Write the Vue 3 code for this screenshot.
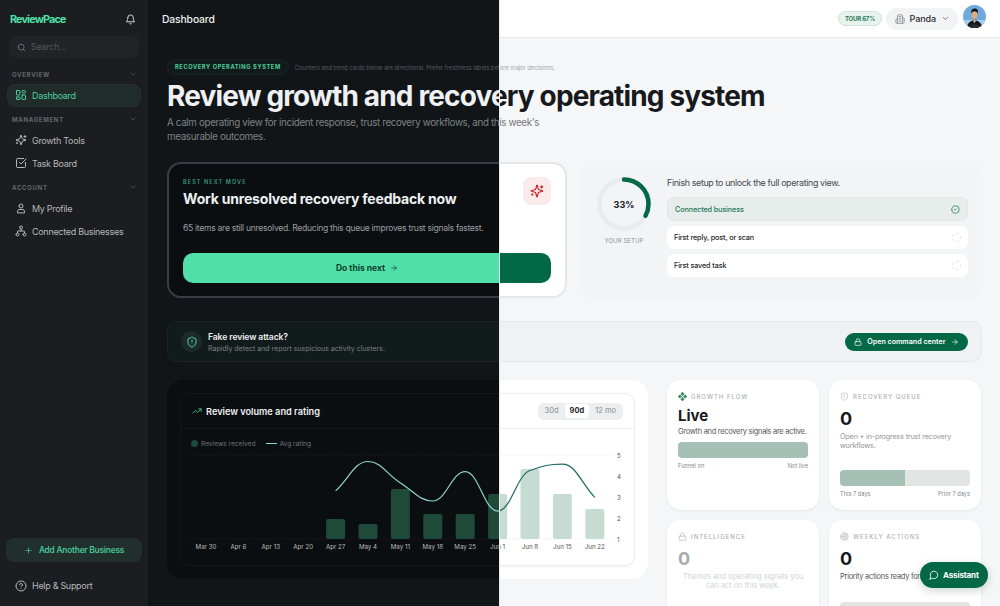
<script setup>
import { h } from 'vue'

const circle = (cx, cy, r) => `M${cx - r} ${cy}a${r} ${r} 0 1 0 ${r * 2} 0a${r} ${r} 0 1 0 ${-r * 2} 0`
const rect = (x, y, w, hh, r) =>
  `M${x + r} ${y}h${w - 2 * r}a${r} ${r} 0 0 1 ${r} ${r}v${hh - 2 * r}a${r} ${r} 0 0 1 ${-r} ${r}h${2 * r - w}a${r} ${r} 0 0 1 ${-r} ${-r}v${2 * r - hh}a${r} ${r} 0 0 1 ${r} ${-r}z`

const shield = 'M20 13c0 5-3.5 7.5-7.66 8.95a1 1 0 0 1-.67-.01C7.5 20.5 4 18 4 13V6a1 1 0 0 1 1-1c2 0 4.5-1.2 6.24-2.72a1.17 1.17 0 0 1 1.52 0C14.51 3.81 17 5 19 5a1 1 0 0 1 1 1z'
const sparkle = 'M9.937 15.5A2 2 0 0 0 8.5 14.063l-6.135-1.582a.5.5 0 0 1 0-.962L8.5 9.936A2 2 0 0 0 9.937 8.5l1.582-6.135a.5.5 0 0 1 .963 0L14.063 8.5A2 2 0 0 0 15.5 9.937l6.135 1.581a.5.5 0 0 1 0 .964L15.5 14.063a2 2 0 0 0-1.437 1.437l-1.582 6.135a.5.5 0 0 1-.963 0z'

const icons = {
  bell: ['M6 8a6 6 0 0 1 12 0c0 7 3 9 3 9H3s3-2 3-9', 'M10.3 21a1.94 1.94 0 0 0 3.4 0'],
  search: [circle(11, 11, 8), 'm21 21-4.3-4.3'],
  chevron: ['m6 9 6 6 6-6'],
  dashboard: [rect(3, 3, 7, 9, 1), rect(14, 3, 7, 5, 2.5), rect(14, 12, 7, 9, 1), rect(3, 16, 7, 5, 1)],
  sparkles: [sparkle, 'M20 3v4', 'M22 5h-4', 'M4 17v2', 'M5 18H3'],
  task: ['M21 10.5V19a2 2 0 0 1-2 2H5a2 2 0 0 1-2-2V5a2 2 0 0 1 2-2h12.5', 'm9 11 3 3L22 4'],
  user: [circle(12, 8, 4), 'M5 21v-2a4 4 0 0 1 4-4h6a4 4 0 0 1 4 4v2z'],
  network: [circle(12, 5, 3), circle(5, 19, 3), circle(19, 19, 3), 'M5 16v-3a1 1 0 0 1 1-1h12a1 1 0 0 1 1 1v3', 'M12 12V8'],
  plus: ['M5 12h14', 'M12 5v14'],
  help: [circle(12, 12, 10), 'M9.09 9a3 3 0 0 1 5.83 1c0 2-3 3-3 3', 'M12 17h.01'],
  shield: [shield, 'M12 8v4', 'M12 16h.01'],
  trend: ['M22 7l-8.5 8.5-5-5L2 17', 'M16 7h6v6'],
  lock: [rect(3, 11, 18, 11, 2), 'M7 11V7a5 5 0 0 1 10 0v4'],
  arrow: ['M5 12h14', 'm12 5 7 7-7 7'],
  building: ['M6 22V4a2 2 0 0 1 2-2h8a2 2 0 0 1 2 2v18Z', 'M6 12H4a2 2 0 0 0-2 2v6a2 2 0 0 0 2 2h2', 'M18 9h2a2 2 0 0 1 2 2v9a2 2 0 0 1-2 2h-2', 'M10 6h4', 'M10 10h4', 'M10 14h4', 'M10 18h4'],
  chat: ['M7.9 20A9 9 0 1 0 4 16.1L2 22Z'],
  check: [circle(12, 12, 10), 'm9 12 2 2 4-4'],
  target: [circle(12, 12, 10), circle(12, 12, 6), circle(12, 12, 2)],
}

const Icon = (props) =>
  h(
    'svg',
    {
      viewBox: '0 0 24 24',
      fill: 'none',
      stroke: 'currentColor',
      'stroke-width': props.weight || 2,
      'stroke-linecap': 'round',
      'stroke-linejoin': 'round',
    },
    icons[props.name].map((d) => h('path', { d })),
  )
Icon.props = ['name', 'weight']

const themes = ['light', 'dark']

const navGroups = [
  { title: 'OVERVIEW', items: [{ label: 'Dashboard', icon: 'dashboard', active: true }] },
  {
    title: 'MANAGEMENT',
    items: [
      { label: 'Growth Tools', icon: 'sparkles' },
      { label: 'Task Board', icon: 'task' },
    ],
  },
  {
    title: 'ACCOUNT',
    items: [
      { label: 'My Profile', icon: 'user' },
      { label: 'Connected Businesses', icon: 'network' },
    ],
  },
]

const setupSteps = [
  { label: 'Connected business', done: true },
  { label: 'First reply, post, or scan' },
  { label: 'First saved task' },
]

const weeks = [
  { label: 'Mar 30' },
  { label: 'Apr 6' },
  { label: 'Apr 13' },
  { label: 'Apr 20' },
  { label: 'Apr 27', reviews: 4, rating: 3.29 },
  { label: 'May 4', reviews: 3, rating: 4.69 },
  { label: 'May 11', reviews: 10, rating: 3.67 },
  { label: 'May 18', reviews: 5, rating: 2.81 },
  { label: 'May 25', reviews: 5, rating: 4.21 },
  { label: 'Jun 1', reviews: 9, rating: 2.33 },
  { label: 'Jun 8', reviews: 14, rating: 4.26 },
  { label: 'Jun 15', reviews: 9, rating: 4.57 },
  { label: 'Jun 22', reviews: 6, rating: 2.98 },
]

const baseY = 89
const weekX = (i) => 25 + i * 32.4
const ratingY = (v) => baseY - (v - 1) * 21
const ticks = [5, 4, 3, 2, 1]

const bars = weeks
  .map((w, i) => ({ x: weekX(i) - 9.5, height: (w.reviews || 0) * 5 }))
  .filter((b) => b.height > 0)

// courbe monotone entre les points de note
const ratingPath = (() => {
  const pts = weeks
    .map((w, i) => (w.rating ? [weekX(i), ratingY(w.rating)] : null))
    .filter(Boolean)
  const slopes = pts.slice(1).map((p, i) => (p[1] - pts[i][1]) / (p[0] - pts[i][0]))
  const tan = pts.map((_, i) => {
    if (i === 0) return slopes[0]
    if (i === pts.length - 1) return slopes[i - 1]
    if (slopes[i - 1] * slopes[i] <= 0) return 0
    return (2 * slopes[i - 1] * slopes[i]) / (slopes[i - 1] + slopes[i])
  })
  let d = `M${pts[0][0]} ${pts[0][1]}`
  for (let i = 1; i < pts.length; i++) {
    const dx = (pts[i][0] - pts[i - 1][0]) / 2.4
    d += `C${pts[i - 1][0] + dx} ${pts[i - 1][1] + tan[i - 1] * dx} ${pts[i][0] - dx} ${pts[i][1] - tan[i] * dx} ${pts[i][0]} ${pts[i][1]}`
  }
  return d
})()
</script>

<template>
  <div class="stage">
    <div v-for="theme in themes" :key="theme" class="layer" :class="theme">
      <aside class="sidebar">
        <div class="brand-row">
          <span class="brand">ReviewPace</span>
          <Icon name="bell" class="bell" />
        </div>
        <div class="side-search">
          <Icon name="search" class="search-icon" />
          <span>Search...</span>
        </div>
        <nav class="nav">
          <section v-for="group in navGroups" :key="group.title" class="nav-group">
            <header class="nav-title">
              <span>{{ group.title }}</span>
              <Icon name="chevron" class="nav-chevron" />
            </header>
            <a
              v-for="item in group.items"
              :key="item.label"
              class="nav-item"
              :class="{ active: item.active }"
            >
              <Icon :name="item.icon" class="nav-icon" />
              <span>{{ item.label }}</span>
            </a>
          </section>
        </nav>
        <div class="side-bottom">
          <button class="add-business">
            <Icon name="plus" class="add-icon" />
            Add Another Business
          </button>
          <a class="nav-item help">
            <Icon name="help" class="nav-icon" />
            <span>Help &amp; Support</span>
          </a>
        </div>
      </aside>

      <div class="main">
        <header class="topbar">
          <h2 class="page-name">Dashboard</h2>
          <div class="top-actions">
            <span class="tour">TOUR 67%</span>
            <div class="biz-switch">
              <Icon name="building" class="biz-icon" :weight="1.6" />
              <span>Panda</span>
              <Icon name="chevron" class="biz-chevron" />
            </div>
            <svg class="avatar" viewBox="0 0 46 46">
              <defs>
                <clipPath :id="'avatar-' + theme"><circle cx="23" cy="23" r="23" /></clipPath>
              </defs>
              <g :clip-path="'url(#avatar-' + theme + ')'">
                <rect width="46" height="46" fill="#6fa9dd" />
                <rect y="30" width="46" height="16" fill="#a9cbea" />
                <path d="M8 46c0-10 7-15 15-15s15 5 15 15z" fill="#15181d" />
                <path d="M20 31l3 5 3-5z" fill="#e8e8e8" />
                <path d="M12 41l11-3 11 3-3 5H15z" fill="#262a31" />
                <rect x="20.500" y="24" width="5" height="8" fill="#c48f6e" />
                <ellipse cx="23" cy="19" rx="6" ry="8" fill="#dcab88" />
                <path d="M16.500 18c-1.500-8 3-11 7-11s8 2.500 6 11c-.5-4-3-5-6.500-5s-6 1-6.500 5z" fill="#14161a" />
              </g>
            </svg>
          </div>
        </header>

        <main class="content">
          <div class="intro-meta">
            <span class="intro-pill">RECOVERY OPERATING SYSTEM</span>
            <span class="intro-note">Counters and trend cards below are directional. Prefer freshness labels before major decisions.</span>
          </div>
          <h1 class="headline">Review growth and recovery operating system</h1>
          <p class="lede">A calm operating view for incident response, trust recovery workflows, and this week's measurable outcomes.</p>

          <div class="hero-row">
            <section class="next-card">
              <div class="next-top">
                <div>
                  <div class="eyebrow">BEST NEXT MOVE</div>
                  <h3 class="next-title">Work unresolved recovery feedback now</h3>
                </div>
                <div class="spark-tile"><Icon name="sparkles" class="spark-icon" /></div>
              </div>
              <p class="next-desc">65 items are still unresolved. Reducing this queue improves trust signals fastest.</p>
              <button class="next-btn">
                Do this next
                <Icon name="arrow" class="next-arrow" />
              </button>
            </section>

            <section class="setup-card">
              <div class="setup-ring">
                <div class="ring-wrap">
                  <svg viewBox="0 0 54 54" class="ring">
                    <circle cx="27" cy="27" r="24.500" class="ring-track" />
                    <circle
                      cx="27"
                      cy="27"
                      r="24.500"
                      class="ring-value"
                      pathLength="100"
                      stroke-dasharray="33 100"
                      transform="rotate(-90 27 27)"
                    />
                  </svg>
                  <span class="ring-label">33%</span>
                </div>
                <span class="ring-caption">YOUR SETUP</span>
              </div>
              <div class="setup-body">
                <p class="setup-title">Finish setup to unlock the full operating view.</p>
                <div
                  v-for="step in setupSteps"
                  :key="step.label"
                  class="setup-step"
                  :class="{ done: step.done }"
                >
                  <span>{{ step.label }}</span>
                  <Icon v-if="step.done" name="check" class="step-check" />
                  <i v-else class="step-todo"></i>
                </div>
              </div>
            </section>
          </div>

          <section class="alert-banner">
            <span class="alert-badge"><Icon name="shield" class="alert-icon" /></span>
            <div class="alert-text">
              <strong>Fake review attack?</strong>
              <span>Rapidly detect and report suspicious activity clusters.</span>
            </div>
            <button class="alert-btn">
              <Icon name="lock" class="alert-btn-icon" />
              Open command center
              <Icon name="arrow" class="alert-btn-icon" />
            </button>
          </section>

          <div class="lower-row">
            <section class="chart-shell">
              <div class="chart-card">
                <header class="chart-head">
                  <Icon name="trend" class="trend-icon" />
                  <h3>Review volume and rating</h3>
                  <div class="ranges">
                    <span>30d</span>
                    <span class="on">90d</span>
                    <span>12 mo</span>
                  </div>
                </header>
                <div class="legend">
                  <i class="legend-dot"></i>
                  <span>Reviews received</span>
                  <i class="legend-line"></i>
                  <span>Avg rating</span>
                </div>
                <svg class="plot" viewBox="0 0 453 115">
                  <line x1="9" x2="430" y1="5" y2="5" class="grid-line" />
                  <line x1="9" x2="430" :y1="baseY" :y2="baseY" class="grid-line" />
                  <rect
                    v-for="bar in bars"
                    :key="bar.x"
                    class="plot-bar"
                    :x="bar.x"
                    :y="baseY - bar.height"
                    width="19"
                    :height="bar.height"
                    rx="2"
                  />
                  <path :d="ratingPath" class="plot-line" />
                  <text
                    v-for="(week, i) in weeks"
                    :key="week.label"
                    :x="weekX(i)"
                    y="98.500"
                    text-anchor="middle"
                    class="plot-label"
                  >{{ week.label }}</text>
                  <text
                    v-for="tick in ticks"
                    :key="tick"
                    x="436"
                    :y="ratingY(tick) + 2.500"
                    class="plot-label"
                  >{{ tick }}</text>
                </svg>
              </div>
            </section>

            <div class="stats">
              <article class="stat">
                <div class="stat-label">
                  <svg class="stat-icon flow-icon" viewBox="0 0 24 24">
                    <rect x="8" y="1" width="8" height="8" transform="rotate(45 12 5)" />
                    <rect x="8" y="15" width="8" height="8" transform="rotate(45 12 19)" />
                    <rect x="1" y="8" width="8" height="8" transform="rotate(45 5 12)" />
                    <rect x="15" y="8" width="8" height="8" transform="rotate(45 19 12)" />
                  </svg>
                  GROWTH FLOW
                </div>
                <div class="stat-word">Live</div>
                <p class="stat-strong">Growth and recovery signals are active.</p>
                <div class="meter"><i style="width: 100%"></i></div>
                <div class="meter-labels"><span>Funnel on</span><span>Not live</span></div>
              </article>

              <article class="stat">
                <div class="stat-label"><Icon name="shield" class="stat-icon" :weight="1.6" /> RECOVERY QUEUE</div>
                <div class="stat-num">0</div>
                <p class="stat-desc">Open + in-progress trust recovery workflows.</p>
                <div class="meter push"><i style="width: 50%"></i></div>
                <div class="meter-labels"><span>This 7 days</span><span>Prior 7 days</span></div>
              </article>

              <article class="stat locked">
                <div class="stat-label"><Icon name="lock" class="stat-icon" :weight="1.6" /> INTELLIGENCE</div>
                <div class="stat-num">0</div>
                <p class="stat-desc">Themes and operating signals you can act on this week.</p>
              </article>

              <article class="stat">
                <div class="stat-label"><Icon name="target" class="stat-icon" :weight="1.8" /> WEEKLY ACTIONS</div>
                <div class="stat-num">0</div>
                <p class="stat-strong">Priority actions ready for</p>
                <div class="meter push"></div>
              </article>
            </div>
          </div>
        </main>

        <button class="assistant">
          <Icon name="chat" class="assistant-icon" />
          Assistant
        </button>
      </div>
    </div>
    <div class="split-line"></div>
  </div>
</template>

<style scoped>
.light {
  --bg: #f5f6f8;
  --top: #ffffff;
  --top-line: #e6e8eb;
  --heading: #17191c;
  --body: #74787d;
  --note: #a3a6aa;
  --card: #ffffff;
  --card-line: #e5e7ea;
  --accent: #036845;
  --accent-ink: #ffffff;
  --accent-text: #1f7a55;
  --panel: #f2f4f6;
  --banner: #eff1f3;
  --banner-line: #e6e9eb;
  --inner-line: #eceef0;
  --bar: #c6dcd3;
  --line: #1b6a62;
  --plot-text: #4d5155;
  --grid: #dfe2e5;
}

.dark {
  --bg: #111518;
  --top: #111518;
  --top-line: #111518;
  --heading: #eef0f1;
  --body: #7e8286;
  --note: #55595d;
  --card: #0b0e11;
  --card-line: #15191c;
  --accent: #4ee0a8;
  --accent-ink: #0f3d2c;
  --accent-text: #4ecf9d;
  --panel: #181b1e;
  --banner: #121b1b;
  --banner-line: #1a2423;
  --inner-line: #12171a;
  --bar: #1f4a3a;
  --line: #8ed6c4;
  --plot-text: #b9bcbf;
  --grid: #22272a;
}

.stage {
  position: relative;
  width: 1000px;
  height: 606px;
  overflow: hidden;
  font-family: Inter, 'Liberation Sans', sans-serif;
}

.layer {
  display: flex;
  width: 1000px;
  height: 606px;
  overflow: hidden;
  background: var(--bg);
  color: var(--heading);
}

/* la moitié sombre recouvre la moitié claire */
.layer.dark {
  position: absolute;
  inset: 0;
  clip-path: inset(0 500px 0 0);
}

.split-line {
  position: absolute;
  top: 0;
  bottom: 0;
  left: 499px;
  width: 1px;
  background: #e9eaec;
}

svg {
  display: block;
  flex: none;
}

button {
  font-family: inherit;
  border: none;
  cursor: pointer;
}

/* Sidebar */
.sidebar {
  flex: none;
  display: flex;
  flex-direction: column;
  width: 148px;
  height: 606px;
  box-sizing: border-box;
  padding: 0 7px;
  background: #1b1d20;
}

.brand-row {
  display: flex;
  align-items: center;
  justify-content: space-between;
  height: 36px;
  padding: 2px 5px 0 3px;
  box-sizing: border-box;
}

.brand {
  font-size: 10.800px;
  font-weight: 700;
  letter-spacing: -0.85px;
  color: #4ee0a8;
}

.bell {
  width: 11px;
  height: 11px;
  color: #e4e5e6;
}

.side-search {
  display: flex;
  align-items: center;
  gap: 5px;
  height: 22px;
  margin: 0 2px;
  padding: 0 8px;
  border-radius: 8px;
  background: #212427;
  font-size: 8.500px;
  color: #55585b;
}

.search-icon {
  width: 9px;
  height: 9px;
  color: #7c7f82;
}

.nav {
  display: flex;
  flex-direction: column;
  gap: 4.500px;
  margin-top: 8px;
}

.nav-title {
  display: flex;
  align-items: center;
  justify-content: space-between;
  height: 16px;
  margin-bottom: 1.500px;
  padding: 0 4px 0 5px;
  font-size: 6px;
  font-weight: 700;
  letter-spacing: 0.7px;
  color: #65686b;
}

.nav-chevron {
  width: 8px;
  height: 8px;
  color: #5d6063;
}

.nav-item {
  display: flex;
  align-items: center;
  gap: 5px;
  height: 23px;
  padding: 0 8px;
  border-radius: 8px;
  box-sizing: border-box;
  font-size: 9px;
  letter-spacing: -0.3px;
  white-space: nowrap;
  color: #b6b8ba;
}

.nav-item.active {
  background: #1f2c2a;
  border: 1px solid #223230;
  padding: 0 7px;
  color: #4ecf9d;
}

.nav-icon {
  width: 12px;
  height: 12px;
}

.side-bottom {
  margin-top: auto;
  padding-bottom: 9px;
}

.add-business {
  display: flex;
  align-items: center;
  justify-content: center;
  gap: 6px;
  width: 136px;
  height: 24px;
  margin-left: -1px;
  border-radius: 8px;
  background: #21302d;
  font-size: 8.300px;
  font-weight: 600;
  letter-spacing: -0.2px;
  color: #47c596;
}

.add-icon {
  width: 9px;
  height: 9px;
}

.help {
  margin-top: 12px;
}

/* Main */
.main {
  flex: 1;
  min-width: 0;
  position: relative;
}

.topbar {
  display: flex;
  align-items: center;
  justify-content: space-between;
  height: 38px;
  box-sizing: border-box;
  padding: 0 14px;
  background: var(--top);
  border-bottom: 1px solid var(--top-line);
}

.page-name {
  margin: 0;
  font-size: 10.300px;
  font-weight: 500;
  letter-spacing: -0.1px;
}

.top-actions {
  display: flex;
  align-items: center;
}

.tour {
  padding: 3px 5.500px;
  border: 1px solid #cfe3d8;
  border-radius: 8px;
  background: #e6f2ec;
  font-size: 6px;
  font-weight: 700;
  letter-spacing: -0.2px;
  color: #2a7a55;
}

.biz-switch {
  display: flex;
  align-items: center;
  gap: 5px;
  height: 22px;
  margin-left: 4px;
  padding: 0 8px 0 9px;
  border-radius: 11px;
  background: #f1f3f4;
  font-size: 9px;
  font-weight: 500;
  letter-spacing: -0.1px;
  color: #2a2d30;
}

.biz-icon {
  width: 10px;
  height: 10px;
  color: #74787b;
}

.biz-chevron {
  width: 9px;
  height: 9px;
  color: #55585b;
}

.avatar {
  width: 23px;
  height: 23px;
  margin: 0 0 4px 5px;
}

.content {
  padding: 21px 18px 0 19px;
}

.intro-meta {
  display: flex;
  align-items: center;
  gap: 6px;
}

.intro-pill {
  padding: 3px 7px;
  border: 1px solid var(--banner-line);
  border-radius: 8px;
  background: var(--banner);
  font-size: 5.700px;
  line-height: 8px;
  font-weight: 700;
  letter-spacing: 0.6px;
  color: var(--accent-text);
}

.intro-note {
  font-size: 5.900px;
  letter-spacing: -0.05px;
  color: var(--note);
}

.headline {
  margin: 3px 0 0;
  font-size: 28px;
  line-height: 36px;
  font-weight: 700;
  letter-spacing: -0.85px;
  white-space: nowrap;
  color: var(--heading);
}

.lede {
  width: 385px;
  margin: 2px 0 0;
  font-size: 9.800px;
  line-height: 14px;
  letter-spacing: -0.35px;
  color: var(--body);
}

.hero-row {
  display: grid;
  grid-template-columns: 400px 401px;
  gap: 14px;
  margin-top: 17px;
  height: 137px;
}

.next-card {
  display: flex;
  flex-direction: column;
  box-sizing: border-box;
  height: 136px;
  margin-top: 1px;
  padding: 14.500px 14px 13px;
  border: 2px solid var(--hero-line, #3a3d41);
  border-radius: 14px;
  background: var(--card);
}

.light .next-card {
  --hero-line: #e4e6e9;
}

.next-top {
  display: flex;
  justify-content: space-between;
}

.eyebrow {
  font-size: 5.500px;
  line-height: 7px;
  font-weight: 600;
  letter-spacing: 1.1px;
  color: var(--accent-text);
  opacity: 0.7;
}

.next-title {
  margin: 3px 0 0;
  font-size: 14px;
  line-height: 20px;
  font-weight: 700;
  letter-spacing: -0.2px;
}

.spark-tile {
  display: grid;
  place-items: center;
  width: 28px;
  height: 28px;
  margin-top: -1.500px;
  border-radius: 8px;
  background: #fbeaea;
}

.spark-icon {
  width: 14px;
  height: 14px;
  color: #c8202a;
}

.next-desc {
  margin: 13.500px 0 0;
  font-size: 8.600px;
  line-height: 12px;
  letter-spacing: -0.3px;
  color: #9a9da0;
}

.next-btn {
  display: flex;
  align-items: center;
  justify-content: center;
  gap: 5px;
  height: 30px;
  margin-top: auto;
  border-radius: 10px;
  background: var(--accent);
  font-size: 8.500px;
  font-weight: 700;
  color: var(--accent-ink);
}

.next-arrow {
  width: 8px;
  height: 8px;
}

.setup-card {
  display: flex;
  gap: 16px;
  height: 139px;
  box-sizing: border-box;
  padding: 16px 14px 0 16px;
  border-radius: 14px;
  background: var(--panel);
}

.setup-ring {
  display: flex;
  flex-direction: column;
  align-items: center;
  flex: none;
  width: 54px;
}

.ring-wrap {
  position: relative;
  width: 54px;
  height: 54px;
}

.ring {
  width: 54px;
  height: 54px;
}

.ring circle {
  fill: none;
  stroke-width: 4.500;
}

.ring-track {
  stroke: #e8ecec;
}

.ring-value {
  stroke: #036845;
  stroke-linecap: round;
}

.ring-label {
  position: absolute;
  inset: 0;
  display: grid;
  place-items: center;
  font-size: 9px;
  font-weight: 700;
  color: #17191c;
}

.ring-caption {
  margin-top: 6px;
  font-size: 6px;
  letter-spacing: 0.1px;
  white-space: nowrap;
  color: #8f9396;
}

.setup-body {
  flex: 1;
  min-width: 0;
}

.setup-title {
  margin: 0 0 8px;
  font-size: 8.900px;
  line-height: 12px;
  letter-spacing: -0.35px;
  color: #45494d;
}

.setup-step {
  display: flex;
  align-items: center;
  justify-content: space-between;
  height: 23px;
  box-sizing: border-box;
  margin-bottom: 5px;
  padding: 0 7px;
  border-radius: 7px;
  background: #ffffff;
  font-size: 7.300px;
  font-weight: 500;
  letter-spacing: -0.15px;
  color: #26292c;
}

.setup-step.done {
  height: 24px;
  border: 1px solid #dfe7e4;
  background: #e7edeb;
  color: #1f7a55;
}

.step-check {
  width: 9px;
  height: 9px;
  color: #1f7a55;
}

.step-todo {
  box-sizing: border-box;
  width: 9px;
  height: 9px;
  border: 1px dashed #e1e3e5;
  border-radius: 50%;
}

.alert-banner {
  display: flex;
  align-items: center;
  height: 41px;
  box-sizing: border-box;
  margin-top: 23px;
  padding: 0 13px;
  border: 1px solid var(--banner-line);
  border-radius: 10px;
  background: var(--banner);
}

.alert-badge {
  display: grid;
  place-items: center;
  width: 21px;
  height: 21px;
  border-radius: 50%;
  background: #1c2b29;
}

.alert-icon {
  width: 12px;
  height: 12px;
  color: #4ecf9d;
}

.alert-text {
  display: flex;
  flex-direction: column;
  gap: 1px;
  margin-left: 6px;
  padding-top: 2px;
  font-size: 7px;
  line-height: 10px;
  color: var(--body);
}

.alert-text strong {
  font-size: 8.600px;
  line-height: 11px;
  font-weight: 600;
  letter-spacing: -0.1px;
  color: var(--heading);
}

.alert-btn {
  display: flex;
  align-items: center;
  gap: 5px;
  height: 18px;
  margin-left: auto;
  padding: 0 9.500px;
  border-radius: 9px;
  background: #036845;
  font-size: 7.100px;
  font-weight: 600;
  color: #ffffff;
}

.alert-btn-icon {
  width: 8px;
  height: 8px;
}

.lower-row {
  display: grid;
  grid-template-columns: 481px 1fr;
  gap: 19px;
  margin-top: 18px;
  align-items: start;
}

.chart-shell {
  padding: 13px;
  border-radius: 16px;
  background: var(--card);
}

.chart-card {
  border: 1px solid var(--inner-line);
  border-radius: 10px;
  background: var(--card);
}

.light .chart-card {
  box-shadow: 0 1px 2px rgba(20, 30, 40, 0.06);
}

.chart-head {
  display: flex;
  align-items: center;
  gap: 4px;
  height: 35px;
  box-sizing: border-box;
  padding: 0 11px 0 11px;
  border-bottom: 1px solid var(--inner-line);
}

.chart-head h3 {
  margin: 0;
  font-size: 9.200px;
  font-weight: 600;
}

.trend-icon {
  width: 10px;
  height: 10px;
  color: var(--accent-text);
}

.ranges {
  display: flex;
  align-items: center;
  gap: 1px;
  margin-left: auto;
  padding: 1.500px 2px;
  border-radius: 6px;
  background: #eceef0;
  font-size: 7.500px;
  color: #85898c;
}

.ranges span {
  padding: 0 5px;
  line-height: 14px;
  border-radius: 4px;
}

.ranges .on {
  background: #ffffff;
  font-weight: 700;
  color: #26292c;
}

.legend {
  display: flex;
  align-items: center;
  height: 29px;
  padding-left: 10px;
  font-size: 6.600px;
  color: #6f7376;
}

.legend-dot {
  width: 7px;
  height: 7px;
  margin-right: 3px;
  border-radius: 50%;
  background: var(--bar);
}

.legend-line {
  width: 11px;
  height: 1.500px;
  margin: 0 3px 0 10px;
  background: var(--line);
}

.plot {
  width: 453px;
  height: 115px;
  margin-top: -8px;
}

.grid-line {
  stroke: var(--grid);
  stroke-width: 0.700;
  stroke-dasharray: 1.500 2;
}

.plot-bar {
  fill: var(--bar);
}

.plot-line {
  fill: none;
  stroke: var(--line);
  stroke-width: 1.200;
}

.plot-label {
  font-size: 6.200px;
  fill: var(--plot-text);
}

.stats {
  display: grid;
  grid-template-columns: 152px 152px;
  grid-auto-rows: 130px;
  gap: 10px;
}

.stat {
  display: flex;
  flex-direction: column;
  box-sizing: border-box;
  padding: 12px 11px;
  border-radius: 14px;
  background: #ffffff;
  box-shadow: 0 1px 2px rgba(20, 30, 40, 0.08);
}

.stat-label {
  display: flex;
  align-items: center;
  gap: 4px;
  height: 9px;
  font-size: 6px;
  font-weight: 500;
  letter-spacing: 1px;
  color: #acafb2;
}

.stat-icon {
  width: 9px;
  height: 9px;
}

.flow-icon {
  fill: #3f8b68;
}

.stat-word {
  margin-top: 5px;
  font-size: 15px;
  line-height: 20px;
  font-weight: 700;
  color: #17191c;
}

.stat-num {
  margin-top: 6px;
  font-size: 18px;
  line-height: 24px;
  font-weight: 700;
  color: #17191c;
}

.stat-strong {
  margin: 0;
  font-size: 7.500px;
  line-height: 11px;
  letter-spacing: -0.3px;
  white-space: nowrap;
  color: #55595c;
}

.stat-desc {
  margin: 1px 0 0;
  font-size: 7.200px;
  line-height: 9px;
  letter-spacing: -0.15px;
  color: #909497;
}

.locked .stat-num {
  color: #a8abad;
}

.locked .stat-desc {
  text-align: center;
  font-size: 7.500px;
  letter-spacing: -0.05px;
  color: #d2d4d6;
}

.meter {
  height: 16px;
  margin-top: 5px;
  border-radius: 4px;
  background: #e0e4e3;
  overflow: hidden;
}

.meter.push {
  margin-top: 20px;
}

.meter i {
  display: block;
  height: 100%;
  background: #a5c1b5;
}

.meter-labels {
  display: flex;
  justify-content: space-between;
  margin-top: 4px;
  font-size: 5.700px;
  color: #85898c;
}

.assistant {
  position: absolute;
  left: 772px;
  top: 562px;
  display: flex;
  align-items: center;
  gap: 4px;
  height: 26px;
  padding: 0 9px;
  border-radius: 13px;
  background: #036845;
  font-size: 8px;
  font-weight: 700;
  letter-spacing: -0.15px;
  color: #ffffff;
  box-shadow: 0 3px 10px rgba(3, 60, 40, 0.2);
}

.assistant-icon {
  width: 10px;
  height: 10px;
}
</style>

<style>
html,
body {
  margin: 0;
  background: #f5f6f8;
}
</style>
